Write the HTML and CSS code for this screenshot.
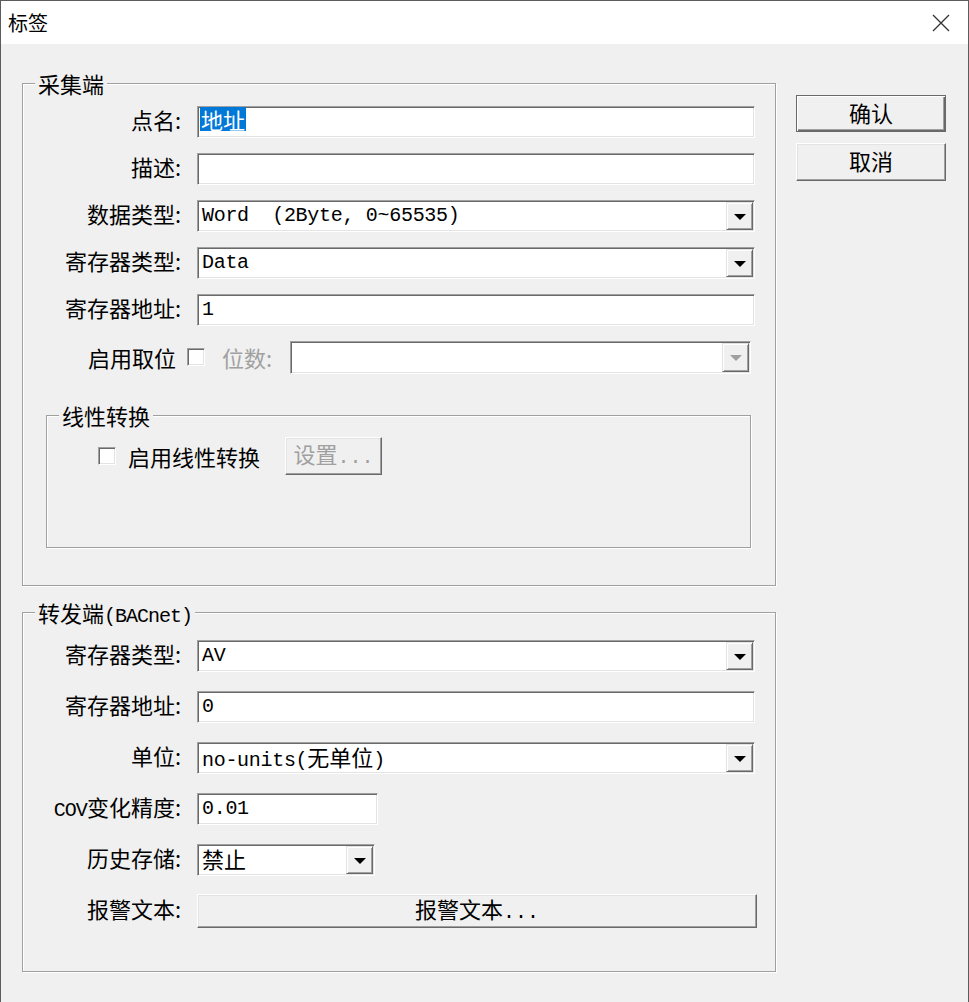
FILE: index.html
```html
<!DOCTYPE html>
<html lang="zh-CN">
<head>
    <meta charset="UTF-8">
    <title>标签</title>
    <link rel="stylesheet" href="styles.css">
</head>
<body>
    <div class="window">
        <header class="titlebar">
            <span class="title">标签</span>
            <svg class="close" width="18" height="18" viewBox="0 0 18 18">
                <path d="M1 1 L17 17 M17 1 L1 17" stroke="#333" stroke-width="1.3" fill="none"/>
            </svg>
        </header>

        <div class="client">
            <div class="main">
                <!-- 采集端 -->
                <fieldset class="group group-collect">
                    <legend>采集端</legend>
                    <div class="form">
                        <label>点名:</label>
                        <div class="field"><span class="val"><span class="sel">地址</span></span></div>

                        <label>描述:</label>
                        <div class="field"><span class="val"></span></div>

                        <label>数据类型:</label>
                        <div class="field combo"><span class="val">Word  (2Byte, 0~65535)</span><span class="drop"></span></div>

                        <label>寄存器类型:</label>
                        <div class="field combo"><span class="val">Data</span><span class="drop"></span></div>

                        <label>寄存器地址:</label>
                        <div class="field"><span class="val">1</span></div>

                        <div class="bits-row">
                            <span>启用取位</span>
                            <span class="check"></span>
                            <span class="muted">位数:</span>
                            <div class="field combo bits"><span class="val"></span><span class="drop disabled"></span></div>
                        </div>
                    </div>

                    <fieldset class="group group-linear">
                        <legend>线性转换</legend>
                        <div class="linear-row">
                            <span class="check"></span>
                            <span class="check-label">启用线性转换</span>
                            <button class="btn btn-setup" disabled><span>设置<span class="mono dots">...</span></span></button>
                        </div>
                    </fieldset>
                </fieldset>

                <!-- 转发端 -->
                <fieldset class="group group-forward">
                    <legend>转发端<span class="mono">(BACnet)</span></legend>
                    <div class="form">
                        <label>寄存器类型:</label>
                        <div class="field combo"><span class="val">AV</span><span class="drop"></span></div>

                        <label>寄存器地址:</label>
                        <div class="field"><span class="val">0</span></div>

                        <label>单位:</label>
                        <div class="field combo"><span class="val">no-units(<span class="cjk">无单位</span>)</span><span class="drop"></span></div>

                        <label><span class="mono">COV</span>变化精度:</label>
                        <div class="field short"><span class="val">0.01</span></div>

                        <label>历史存储:</label>
                        <div class="field combo shorter"><span class="val"><span class="cjk">禁止</span></span><span class="drop"></span></div>

                        <label>报警文本:</label>
                        <button class="btn btn-wide"><span>报警文本<span class="mono dots">...</span></span></button>
                    </div>
                </fieldset>
            </div>

            <div class="actions">
                <button class="btn default"><span>确认</span></button>
                <button class="btn"><span>取消</span></button>
            </div>
        </div>
    </div>
</body>
</html>
```

FILE: styles.css
```css
* {
    margin: 0;
    padding: 0;
    box-sizing: border-box;
}

body {
    background: #f0f0f0;
    font-family: "Noto Sans CJK SC", sans-serif;
    font-size: 22px;
    color: #000;
}

.window {
    height: 100vh;
    border: 1px solid #5c5c5c;
    border-bottom: none;
    background: #f0f0f0;
}

/* Barra de título */
.titlebar {
    height: 43px;
    background: #fff;
    display: flex;
    align-items: center;
    justify-content: space-between;
    padding: 0 18px 0 7px;
}

.title {
    font-size: 20px;
    line-height: 1;
}

/* Área do diálogo */
.client {
    display: flex;
    gap: 20px;
    padding: 26px 22px 0 21px;
}

.main {
    width: 754px;
}

.actions {
    width: 150px;
    padding-top: 25px;
    display: flex;
    flex-direction: column;
    gap: 11px;
}

.mono {
    font-family: "Liberation Mono", monospace;
    font-size: 20px;
    letter-spacing: -1px;
    line-height: 1;
}

.dots {
    letter-spacing: 0;
}

.cjk {
    font-family: "Noto Sans CJK SC", sans-serif;
    font-size: 22px;
    letter-spacing: 0;
}

/* Group box */
.group {
    border: 1px solid #a0a0a0;
    box-shadow: inset 1px 1px 0 #fff, 1px 1px 0 #fff;
    min-width: 0;
}

.group legend {
    height: 26px;
    margin-left: 12px;
    padding: 0 3px;
    line-height: 26px;
    background: #f0f0f0;
}

.group-collect {
    padding: 10px 20px 37px 0;
}

.group-forward {
    margin-top: 13px;
    padding: 15px 20px 44px 0;
}

.group-linear {
    margin: 29px 4px 0 23px;
    padding: 9px 0 72px 0;
}

.form {
    display: grid;
    grid-template-columns: 162px 1fr;
    column-gap: 12px;
    grid-auto-rows: 32px;
    row-gap: 15px;
}

.group-forward .form {
    row-gap: 19px;
}

.form label {
    text-align: right;
    align-self: start;
    line-height: 26px;
    padding-right: 4px;
    white-space: nowrap;
}

/* Campos */
.field {
    display: flex;
    align-items: center;
    height: 32px;
    background: #fff;
    border: 1px solid;
    border-color: #a0a0a0 #fff #fff #a0a0a0;
    box-shadow: inset 1px 1px 0 #696969, inset -1px -1px 0 #e3e3e3;
    padding-left: 4px;
    font-family: "Liberation Mono", "Noto Sans CJK SC", monospace;
    font-size: 20px;
    letter-spacing: -0.3px;
    white-space: pre;
}

.field .val {
    flex: 1;
    line-height: 26px;
}

.field .sel {
    display: inline-block;
    margin-left: -2px;
    padding: 0 1px;
    background: #0078d7;
    color: #fff;
    font-family: "Noto Sans CJK SC", sans-serif;
    font-size: 22px;
    letter-spacing: 0;
    line-height: 24px;
}

.field.short {
    width: 181px;
}

.field.shorter {
    width: 178px;
}

.drop {
    align-self: stretch;
    width: 27px;
    margin: 1px;
    display: flex;
    align-items: center;
    justify-content: center;
    background: #f0f0f0;
    border: 1px solid;
    border-color: #e3e3e3 #696969 #696969 #e3e3e3;
    box-shadow: inset 1px 1px 0 #fff, inset -1px -1px 0 #a0a0a0;
}

.drop::after {
    content: "";
    border-left: 6px solid transparent;
    border-right: 6px solid transparent;
    border-top: 6px solid #000;
    margin-top: 2px;
}

.drop.disabled::after {
    border-top-color: #a0a0a0;
}

/* Linha de bits */
.bits-row {
    grid-column: 1 / -1;
    display: flex;
    align-items: center;
    padding-left: 65px;
    line-height: 26px;
}

.bits-row .check {
    margin-left: 11px;
}

.muted {
    color: #a0a0a0;
    margin-left: 17px;
}

.field.bits {
    flex: 1;
    height: 33px;
    margin: 0 4px 0 18px;
}

.check {
    width: 18px;
    height: 18px;
    background: #fff;
    border: 1px solid;
    border-color: #a0a0a0 #fff #fff #a0a0a0;
    box-shadow: inset 1px 1px 0 #696969, inset -1px -1px 0 #e3e3e3;
}

.linear-row {
    display: flex;
    align-items: center;
    padding-left: 51px;
    line-height: 26px;
}

.check-label {
    margin-left: 12px;
}

/* Botões */
button {
    font: inherit;
    color: inherit;
}

.btn {
    display: flex;
    align-items: center;
    justify-content: center;
    height: 37px;
    padding-bottom: 4px;
    line-height: 26px;
    background: #f0f0f0;
    border: 1px solid;
    border-color: #fff #696969 #696969 #fff;
    box-shadow: inset -1px -1px 0 #a0a0a0, inset 1px 1px 0 #e3e3e3;
}

.btn.default {
    border-color: #696969;
    box-shadow: inset 1px 1px 0 #fff, inset -1px -1px 0 #696969, inset -2px -2px 0 #a0a0a0;
}

.actions .btn + .btn {
    height: 38px;
}

.btn-setup {
    width: 97px;
    height: 38px;
    margin-left: 25px;
    color: #a0a0a0;
}

.btn-wide {
    height: 34px;
    margin: -1px -2px 0 0;
}
```
